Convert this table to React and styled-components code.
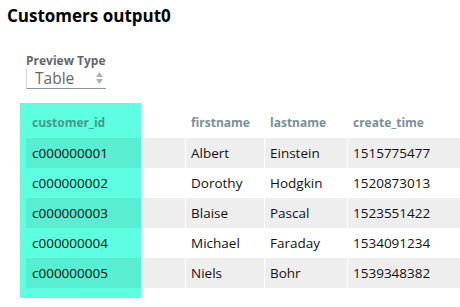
import React from "react";
import styled, { createGlobalStyle } from "styled-components";

const GlobalStyle = createGlobalStyle`
  body {
    margin: 0;
    background: #fff;
    font-family: "Open Sans", "Liberation Sans", sans-serif;
  }
`;

const Page = styled.div`
  width: 460px;
  height: 307px;
  overflow: hidden;
  padding: 4px 0 0 7px;
  box-sizing: border-box;
`;

const Title = styled.h1`
  margin: 0;
  font-size: 17px;
  line-height: 23px;
  font-weight: 700;
  color: #000;
`;

const PreviewBlock = styled.div`
  margin: 26px 0 0 19px;
  width: 80px;
`;

const Label = styled.div`
  font-size: 12px;
  line-height: 15px;
  font-weight: 700;
  color: #666;
`;

const Select = styled.div`
  display: flex;
  align-items: center;
  justify-content: space-between;
  height: 21px;
  box-sizing: border-box;
  border-left: 1px solid #d4d8da;
  border-bottom: 1px solid #8a979d;
  padding: 0 3px 0 8px;
  font-size: 15.5px;
  color: #666;
`;

const Arrows = styled.svg`
  width: 7px;
  height: 14px;
`;

const TableWrap = styled.div`
  position: relative;
  margin: 14px 0 0 13px;
  padding: 0 0 10px 6px;
`;

const Highlight = styled.div`
  position: absolute;
  left: 0;
  top: 0;
  bottom: 0;
  width: 121px;
  background: #5effe0;
`;

const Grid = styled.div`
  position: relative;
`;

const Row = styled.div`
  display: grid;
  grid-template-columns: 159px 79px 83px 1fr;
  height: ${(p) => (p.$head ? "35px" : "30px")};
  background: ${(p) => (p.$shaded ? "rgba(0, 0, 0, 0.067)" : "transparent")};
`;

const Cell = styled.div`
  display: flex;
  align-items: center;
  box-sizing: border-box;
  padding: ${(p) => (p.$head ? "4px" : "0")} 0 0 ${(p) => (p.$first ? "6px" : "5px")};
  border-left: ${(p) => (p.$first ? "none" : "1px solid #fff")};
  white-space: nowrap;
  font-size: ${(p) => (p.$head ? "12px" : "13.5px")};
  font-weight: ${(p) => (p.$head ? 700 : 400)};
  color: ${(p) => (p.$head ? (p.$first ? "#3f9c8b" : "#7a8f9a") : "#111")};
`;

const rows = [
  ["c000000001", "Albert", "Einstein", "1515775477"],
  ["c000000002", "Dorothy", "Hodgkin", "1520873013"],
  ["c000000003", "Blaise", "Pascal", "1523551422"],
  ["c000000004", "Michael", "Faraday", "1534091234"],
  ["c000000005", "Niels", "Bohr", "1539348382"],
];

const headers = ["customer_id", "firstname", "lastname", "create_time"];

export default function App() {
  return (
    <Page>
      <GlobalStyle />
      <Title>Customers output0</Title>
      <PreviewBlock>
        <Label>Preview Type</Label>
        <Select>
          Table
          <Arrows viewBox="0 0 7 14">
            <path d="M3.5 1 L7 6 L0 6 Z" fill="#a7b4ba" />
            <path d="M3.5 13 L7 8 L0 8 Z" fill="#a7b4ba" />
          </Arrows>
        </Select>
      </PreviewBlock>
      <TableWrap>
        <Highlight />
        <Grid>
          <Row $head>
            {headers.map((h, i) => (
              <Cell key={h} $head $first={i === 0}>
                {h}
              </Cell>
            ))}
          </Row>
          {rows.map((r, ri) => (
            <Row key={r[0]} $shaded={ri % 2 === 0}>
              {r.map((c, ci) => (
                <Cell key={ci} $first={ci === 0}>
                  {c}
                </Cell>
              ))}
            </Row>
          ))}
        </Grid>
      </TableWrap>
    </Page>
  );
}
